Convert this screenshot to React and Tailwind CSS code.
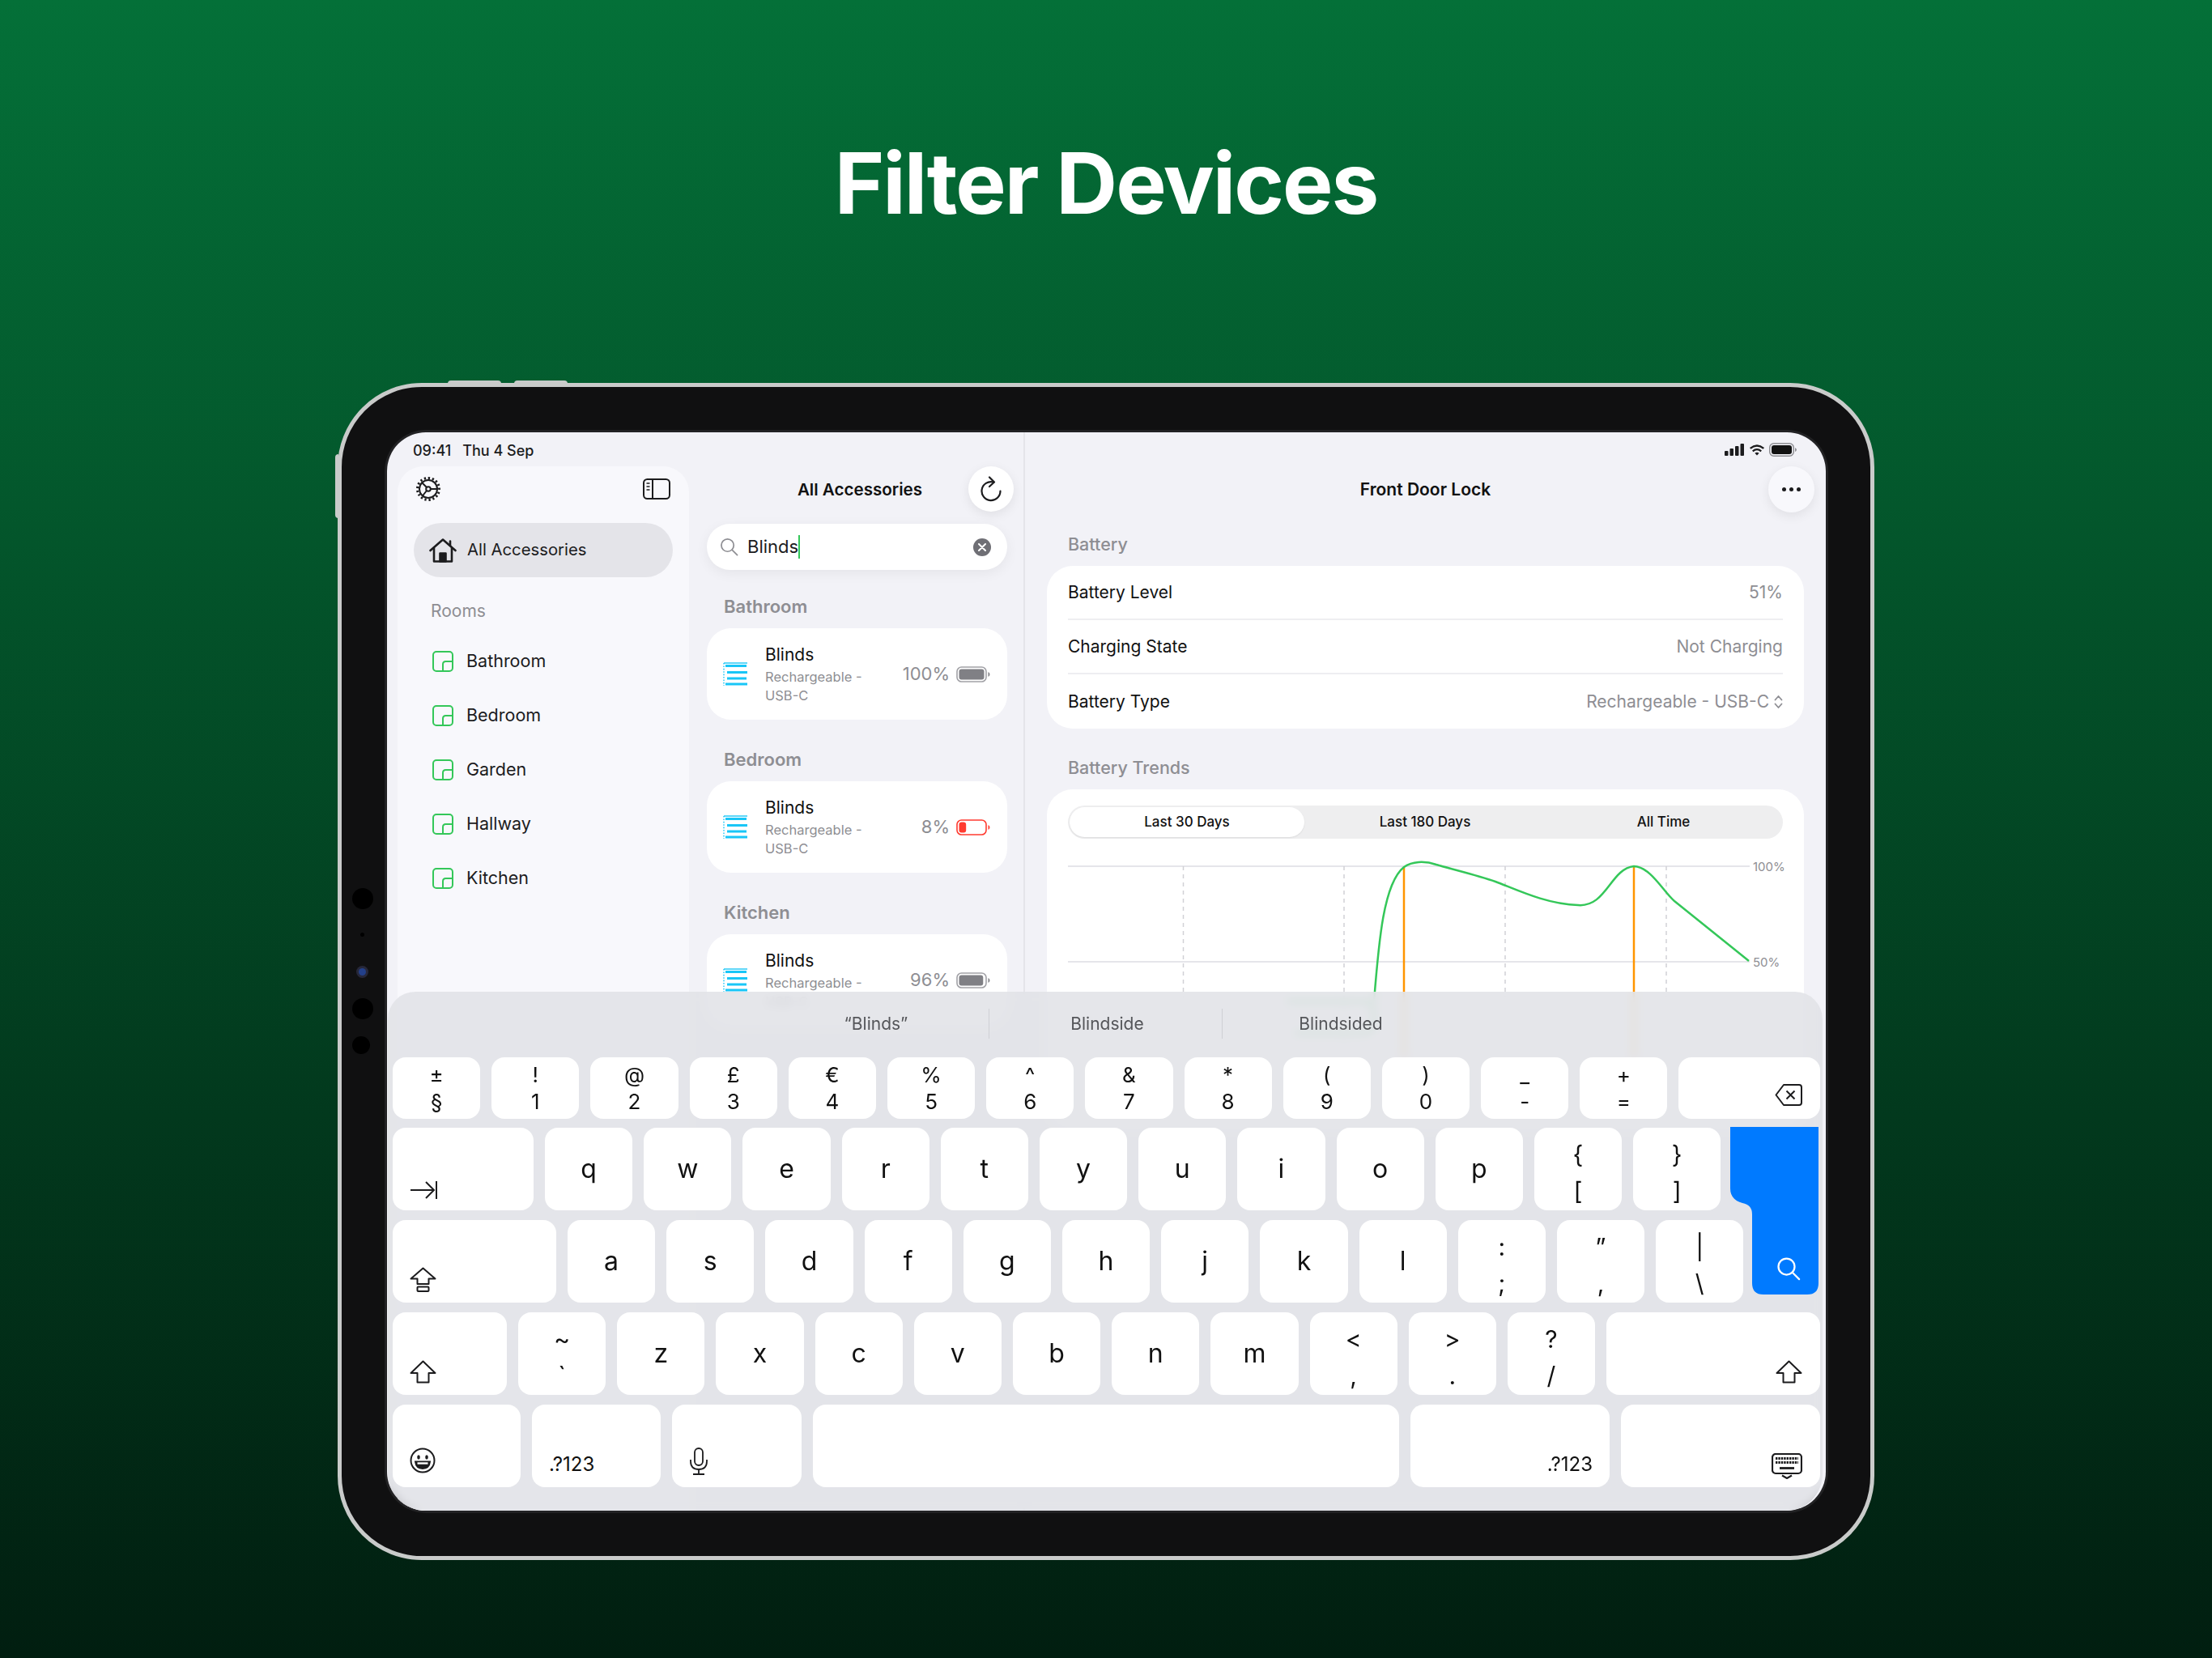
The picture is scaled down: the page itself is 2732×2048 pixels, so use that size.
import React from 'react';

const rooms = ['Bathroom', 'Bedroom', 'Garden', 'Hallway', 'Kitchen'];

const RoomIcon = () => (
  <svg width="26" height="26" viewBox="0 0 26 26" fill="none" stroke="#34c759" strokeWidth="2">
    <rect x="1" y="1" width="24" height="24" rx="4" />
    <path d="M13 25V16.500Q13 13 16.500 13H25" />
  </svg>
);

const GearIcon = () => (
  <svg width="32" height="32" viewBox="0 0 32 32" fill="none" stroke="#1c1c1e" strokeWidth="2">
    <circle cx="16" cy="16" r="11" />
    <circle cx="16" cy="16" r="2.800" />
    <path d="M14 14 7.500 7.500M14 18 8.500 25M18.800 16H27" />
    <path strokeWidth="3" strokeDasharray="2.200 2.720" d="M16 2.500a13.500 13.500 0 1 1-.01 0" />
  </svg>
);

const SidebarIcon = () => (
  <svg width="34" height="26" viewBox="0 0 34 26" fill="none" stroke="#1c1c1e" strokeWidth="2">
    <rect x="1" y="1" width="32" height="24" rx="4.500" />
    <path d="M12 1V25" />
    <path strokeWidth="1.600" d="M4.500 6H8.500M4.500 10H8.500M4.500 14H8.500" />
  </svg>
);

const HomeIcon = () => (
  <svg width="34" height="30" viewBox="0 0 34 30" fill="none" stroke="#1c1c1e" strokeWidth="2.600" strokeLinejoin="round" strokeLinecap="round">
    <path d="M1.500 15 17 1.500 32.500 15" />
    <path d="M6 12V28.500H28V12" />
    <path d="M13.500 28.500V18.500H20.500V28.500Z" fill="#1c1c1e" />
    <path d="M26 3.500V8.500" />
  </svg>
);

const BlindsIcon = () => (
  <svg width="30" height="29" viewBox="0 0 30 29" fill="none" stroke="#19c6f7">
    <path strokeWidth="1.400" d="M1 1H30" />
    <path strokeWidth="2.800" d="M3 4.500H29M5 12.500H30M5 20H29M3 27H30" />
    <path strokeWidth="1.400" strokeDasharray="1.600 1.800" d="M1 1V29" />
  </svg>
);

const Battery = ({ level, low }) => (
  <svg width="42" height="20" viewBox="0 0 42 20" fill="none">
    <rect x="1" y="1" width="36" height="18" rx="5.500" stroke={low ? '#ff3b30' : '#a2a2a7'} strokeWidth="1.600" />
    <rect x="3.500" y="3.500" width={31 * level} height="13" rx="3" fill={low ? '#ff3b30' : '#808085'} />
    <path d="M39.500 7V13Q41.500 12 41.500 10T39.500 7Z" fill={low ? '#ff3b30' : '#808085'} />
  </svg>
);

const SearchGlyph = ({ color = '#8e8e93', size = 24 }) => (
  <svg width={size} height={size} viewBox="0 0 24 24" fill="none" stroke={color} strokeWidth="1.800" strokeLinecap="round">
    <circle cx="10" cy="10" r="8" />
    <path d="m16 16 6.500 6.500" />
  </svg>
);

const ShiftIcon = () => (
  <svg width="33" height="29" viewBox="0 0 33 29" fill="none" stroke="#1c1c1e" strokeWidth="2" strokeLinejoin="round">
    <path d="M16.500 1.500 1.500 16H9.500V27.500H23.500V16H31.500Z" />
  </svg>
);

const CapsIcon = () => (
  <svg width="33" height="31" viewBox="0 0 33 31" fill="none" stroke="#1c1c1e" strokeWidth="2" strokeLinejoin="round">
    <path d="M16.500 1.500 1.500 14.500H9.500V21H23.500V14.500H31.500Z" />
    <rect x="9.500" y="24.500" width="14" height="5.500" rx="1" />
  </svg>
);

const TabIcon = () => (
  <svg width="34" height="24" viewBox="0 0 34 24" fill="none" stroke="#1c1c1e" strokeWidth="2">
    <path d="M1 12H30M20 2l10 10-10 10M33 1V23" />
  </svg>
);

const DeleteIcon = () => (
  <svg width="34" height="29" viewBox="0 0 34 29" fill="none" stroke="#1c1c1e" strokeWidth="2" strokeLinejoin="round">
    <path d="M11 2H30Q33 2 33 5V24Q33 27 30 27H11L1.500 14.500Z" />
    <path d="m14.500 9.500 10 10M24.500 9.500l-10 10" />
  </svg>
);

const EmojiIcon = () => (
  <svg width="32" height="32" viewBox="0 0 32 32" fill="none" stroke="#1c1c1e" strokeWidth="2">
    <circle cx="16" cy="16" r="14.500" />
    <ellipse cx="11" cy="12" rx="1.800" ry="2.800" fill="#1c1c1e" stroke="none" />
    <ellipse cx="21" cy="12" rx="1.800" ry="2.800" fill="#1c1c1e" stroke="none" />
    <path d="M7 17.500H25Q24 26 16 26T7 17.500Z" fill="#1c1c1e" />
    <path d="M9.500 19.500H22.500" stroke="#fff" strokeWidth="2.400" />
  </svg>
);

const MicIcon = () => (
  <svg width="24" height="34" viewBox="0 0 24 34" fill="none" stroke="#1c1c1e" strokeWidth="1.800">
    <rect x="7" y="1" width="10" height="21" rx="5" />
    <path d="M2 15V17Q2 27 12 27T22 17V15M12 27V33M5 33H19" />
  </svg>
);

const KeyboardIcon = () => (
  <svg width="38" height="32" viewBox="0 0 38 32" fill="none" stroke="#1c1c1e" strokeWidth="2.200">
    <rect x="1" y="1" width="36" height="24" rx="4" />
    <path strokeWidth="2.800" strokeDasharray="2.400 1" d="M5 6.500H33M5 11.500H33" />
    <path strokeWidth="2.800" d="M10 18.500H28" />
    <path d="m13 27.500 6 3.500 6-3.500" />
  </svg>
);

const KEY = 'flex shrink-0 bg-white rounded-[16px] text-[#111]';
const Key = ({ w = 'w-[108.2px]', h = 'h-[102px]', className = '', children }) => (
  <div className={`${KEY} ${w} ${h} ${className}`}>{children}</div>
);

const Letter = ({ c }) => (
  <Key className="items-center justify-center text-[32px] leading-none">{c}</Key>
);

const DoubleKey = ({ top, bottom, h = 'h-[102px]', small }) => (
  <Key
    h={h}
    className={`flex-col items-center justify-center leading-none ${small ? 'text-[26px] gap-[7px] pt-[1px]' : 'text-[30px] gap-[15px] pt-[8px]'}`}
  >
    <span>{top}</span>
    <span>{bottom}</span>
  </Key>
);

const Keyboard = () => (
  <div className="absolute left-[1px] right-[4px] bottom-0 h-[641px] rounded-t-[34px] rounded-b-[46px] bg-[#e1e2e6]/85 backdrop-blur-[6px] pl-[6px] flex flex-col">
    <div className="h-[81px] flex items-center pb-[2px] text-[21px] text-[#55565a]">
      <div className="w-[737px] pl-[479px] flex items-center justify-between">
        <span className="w-[236px] text-center">“Blinds”</span>
        <span className="w-px h-[37px] bg-[#cfd0d5]"></span>
      </div>
      <div className="w-[288px] flex items-center justify-between">
        <span className="w-[287px] pl-[4px] text-center">Blindside</span>
        <span className="w-px h-[37px] bg-[#cfd0d5]"></span>
      </div>
      <span className="w-[292px] text-center">Blindsided</span>
    </div>

    <div className="flex gap-[14px]">
      {[['±', '§'], ['!', '1'], ['@', '2'], ['£', '3'], ['€', '4'], ['%', '5'], ['^', '6'], ['&', '7'], ['*', '8'], ['(', '9'], [')', '0'], ['_', '-'], ['+', '=']].map(([t, b]) => (
        <DoubleKey key={t} top={t} bottom={b} h="h-[76px]" small />
      ))}
      <Key w="w-[175px]" h="h-[76px]" className="items-end justify-end pr-[22px] pb-[15px]"><DeleteIcon /></Key>
    </div>

    <div className="relative">
      <div className="flex gap-[14px] mt-[11px]">
        <Key w="w-[174px]" className="items-end pl-[21px] pb-[13px]"><TabIcon /></Key>
        {['q', 'w', 'e', 'r', 't', 'y', 'u', 'i', 'o', 'p'].map(c => <Letter key={c} c={c} />)}
        <DoubleKey top="{" bottom="[" />
        <DoubleKey top="}" bottom="]" />
      </div>
      <div className="flex gap-[14px] mt-[12px]">
        <Key w="w-[202px]" className="items-end pl-[21px] pb-[13px]"><CapsIcon /></Key>
        {['a', 's', 'd', 'f', 'g', 'h', 'j', 'k', 'l'].map(c => <Letter key={c} c={c} />)}
        <DoubleKey top=":" bottom=";" />
        <DoubleKey top="”" bottom="," />
        <DoubleKey top="|" bottom="\" />
      </div>

      {/* return key spans two rows */}
      <div className="absolute left-[1652px] top-[10px] w-[109px] h-[207px]">
        <svg width="109" height="207" viewBox="0 0 109 207" fill="#007aff">
          <path d="M0 0H109V193Q109 207 95 207H41Q27 207 27 193V108Q27 96 15 94Q0 90 0 76Z" />
        </svg>
        <div className="absolute right-[22px] bottom-[17px]"><SearchGlyph color="#fff" size={30} /></div>
      </div>
    </div>

    <div className="flex gap-[14px] mt-[12px]">
      <Key w="w-[141px]" className="items-end pl-[21px] pb-[14px]"><ShiftIcon /></Key>
      <DoubleKey top="~" bottom="`" />
      {['z', 'x', 'c', 'v', 'b', 'n', 'm'].map(c => <Letter key={c} c={c} />)}
      <DoubleKey top="<" bottom="," />
      <DoubleKey top=">" bottom="." />
      <DoubleKey top="?" bottom="/" />
      <Key w="w-[264px]" className="items-end justify-end pr-[22px] pb-[14px]"><ShiftIcon /></Key>
    </div>

    <div className="flex gap-[14px] mt-[12px]">
      <Key w="w-[158px]" className="items-end pl-[21px] pb-[17px]"><EmojiIcon /></Key>
      <Key w="w-[159px]" className="items-end pl-[21px] pb-[16px] text-[24px] leading-none">.?123</Key>
      <Key w="w-[160px]" className="items-end pl-[21px] pb-[15px]"><MicIcon /></Key>
      <Key w="w-[724px]" />
      <Key w="w-[246px]" className="items-end justify-end pr-[21px] pb-[16px] text-[24px] leading-none">.?123</Key>
      <Key w="w-[246px]" className="items-end justify-end pr-[22px] pb-[10px]"><KeyboardIcon /></Key>
    </div>
  </div>
);

const DeviceRow = ({ room, pct, level, low }) => (
  <div>
    <div className="h-[56px] pl-[21px] pt-[18px] text-[22px] leading-none font-semibold text-[#8e8e93]">{room}</div>
    <div className="h-[113px] rounded-[30px] bg-white flex items-center pl-[20px] pr-[21px] mb-[20px]">
      <BlindsIcon />
      <div className="ml-[22px] w-[140px]">
        <div className="text-[21px] leading-[27px] mb-[3px] text-[#111]">Blinds</div>
        <div className="text-[16.500px] leading-[23px] text-[#8e8e93]">Rechargeable - USB-C</div>
      </div>
      <div className="flex-1 flex items-center justify-end gap-[8px]">
        <span className="text-[22px] text-[#8e8e93]">{pct}</span>
        <Battery level={level} low={low} />
      </div>
    </div>
  </div>
);

const Sidebar = () => (
  <div className="w-[360px] shrink-0 ml-[13px] mt-[42px] rounded-t-[32px] bg-[#f8f8fc] px-[20px] pt-[12px]">
    <div className="flex items-center justify-between pl-[2px] pr-[3px] h-[32px]">
      <GearIcon />
      <SidebarIcon />
    </div>
    <div className="mt-[26px] h-[67px] rounded-full bg-[#e4e4e9] flex items-center gap-[13px] pl-[19px] text-[20.300px] text-[#1c1c1e]">
      <HomeIcon />
      All Accessories
    </div>
    <div className="pl-[21px] mt-[29px] text-[21px] leading-[26px] text-[#8e8e93]">Rooms</div>
    <div className="mt-[15px]">
      {rooms.map(r => (
        <div key={r} className="h-[67px] flex items-center gap-[16px] pl-[23px] text-[21.500px] text-[#1c1c1e]">
          <RoomIcon />
          {r}
        </div>
      ))}
    </div>
  </div>
);

const Accessories = () => (
  <div className="w-[415px] shrink-0 border-r-2 border-[#e5e5ea] pl-[22px] pr-[20px] pt-[42px]">
    <div className="relative h-[56px] flex items-center justify-center pl-[7px] pt-[2px] text-[20.600px] font-semibold text-[#111]">
      All Accessories
      <div className="absolute -right-[8px] top-0 w-[56px] h-[56px] rounded-full bg-white shadow-[0_4px_14px_rgba(0,0,0,0.08)] flex items-center justify-center">
        <svg width="26" height="32" viewBox="0 0 26 32" fill="none" stroke="#1c1c1e" strokeWidth="2.200" strokeLinecap="round" strokeLinejoin="round">
          <path d="M16 7.500A11.500 11.500 0 1 0 24.500 18.500" />
          <path d="M11 1.500 17 7.500 11 13" />
        </svg>
      </div>
    </div>
    <div className="mt-[15px] h-[57px] rounded-full bg-white shadow-[0_4px_16px_rgba(0,0,0,0.06)] flex items-center pl-[16px] pr-[20px] text-[22px] text-[#1c1c1e]">
      <SearchGlyph size={23} />
      <span className="ml-[11px]">Blinds</span>
      <span className="w-[2px] h-[29px] bg-[#34c759]"></span>
      <span className="ml-auto w-[22px] h-[22px] rounded-full bg-[#6f6f75] flex items-center justify-center">
        <svg width="10" height="10" viewBox="0 0 10 10" stroke="#fff" strokeWidth="2" strokeLinecap="round"><path d="m1 1 8 8M9 1 1 9" /></svg>
      </span>
    </div>
    <div className="mt-[16px]">
      <DeviceRow room="Bathroom" pct="100%" level={1} />
      <DeviceRow room="Bedroom" pct="8%" level={0.28} low />
      <DeviceRow room="Kitchen" pct="96%" level={0.96} />
    </div>
  </div>
);

const Chart = () => (
  <svg width="885" height="290" viewBox="0 0 885 290" fill="none" className="mt-[25px]">
    <path stroke="#e5e5ea" strokeWidth="2" d="M0 9H842M0 127H842M0 245H842" />
    <path stroke="#d1d1d6" strokeWidth="1.500" strokeDasharray="5 5" d="M142.500 9V245M341 9V245M540 9V245M739 9V245" />
    <text x="846" y="15" fontSize="15" fill="#8e8e93">100%</text>
    <text x="846" y="133" fontSize="15" fill="#8e8e93">50%</text>
    <path stroke="#ff9500" strokeWidth="2.500" d="M415 10V245M699 10V245" />
    <path
      stroke="#34c759"
      strokeWidth="2.500"
      strokeLinejoin="round"
      d="M280 215H365Q378 215 378 202V190Q378 176 365 176H270M378 176C384 100 390 30 415 10C425 3 440 2 455 7C475 13 505 20 528 28C550 36 590 56 630 57C665 60 670 12 699 9C720 10 735 40 749 52L841 126"
    />
  </svg>
);

const Detail = () => (
  <div className="flex-1 min-w-0 pl-[27px] pr-[27px] pt-[42px]">
    <div className="relative h-[56px] flex items-center justify-center pt-[2px] text-[21px] font-semibold text-[#111]">
      Front Door Lock
      <div className="absolute -right-[13px] top-0 w-[57px] h-[57px] rounded-full bg-[#f8f8fc] shadow-[0_4px_14px_rgba(0,0,0,0.08)] flex items-center justify-center gap-[4px]">
        <span className="w-[5px] h-[5px] rounded-full bg-[#1c1c1e]"></span>
        <span className="w-[5px] h-[5px] rounded-full bg-[#1c1c1e]"></span>
        <span className="w-[5px] h-[5px] rounded-full bg-[#1c1c1e]"></span>
      </div>
    </div>
    <div className="pl-[26px] mt-[27px] text-[21.500px] leading-[26px] font-medium text-[#8e8e93]">Battery</div>
    <div className="mt-[14px] rounded-[32px] bg-white px-[26px] text-[21px] text-[#111]">
      <div className="h-[67px] flex items-center justify-between border-b-2 border-[#eeeef1]">
        Battery Level <span className="text-[#8e8e93]">51%</span>
      </div>
      <div className="h-[67px] flex items-center justify-between border-b-2 border-[#eeeef1]">
        Charging State <span className="text-[#8e8e93]">Not Charging</span>
      </div>
      <div className="h-[67px] flex items-center justify-between">
        Battery Type
        <span className="flex items-center gap-[6px] text-[#8e8e93]">
          Rechargeable - USB-C
          <svg width="11" height="18" viewBox="0 0 11 18" fill="none" stroke="#8e8e93" strokeWidth="1.800" strokeLinecap="round" strokeLinejoin="round"><path d="M1.500 6.500 5.500 2l4 4.500M1.500 11.500l4 4.500 4-4.500" /></svg>
        </span>
      </div>
    </div>
    <div className="pl-[26px] mt-[35px] text-[21.500px] leading-[26px] font-medium text-[#8e8e93]">Battery Trends</div>
    <div className="mt-[14px] rounded-[32px] bg-white px-[26px] pt-[20px] h-[420px]">
      <div className="h-[41px] rounded-full bg-[#eeeeef] p-[2px] flex text-[17px] font-medium text-[#111]">
        <div className="w-[290px] rounded-full bg-white flex items-center justify-center shadow-[0_1px_2px_rgba(0,0,0,0.08)]">Last 30 Days</div>
        <div className="w-[298px] flex items-center justify-center">Last 180 Days</div>
        <div className="flex-1 flex items-center justify-center">All Time</div>
      </div>
      <Chart />
    </div>
  </div>
);

const App = () => (
  <div
    className="w-[2732px] h-[2048px] overflow-hidden bg-[linear-gradient(to_bottom,#047038,#011e10)]"
    style={{ fontFamily: 'Inter, "Liberation Sans", sans-serif' }}
  >
    <div className="h-[473px] pt-[166px] text-center text-white text-[105px] leading-[120px] font-bold tracking-[-2px]">
      Filter Devices
    </div>

    <div className="relative w-[1898px] h-[1454px] mx-auto rounded-[104px] border-[5px] border-[#c9cbca] bg-[#101011] p-[56px]">
      {/* hardware buttons */}
      <div className="absolute left-[131px] -top-[8px] w-[66px] h-[4px] rounded-t bg-[#c9cbca]"></div>
      <div className="absolute left-[213px] -top-[8px] w-[66px] h-[4px] rounded-t bg-[#c9cbca]"></div>
      <div className="absolute -left-[8px] top-[83px] w-[4px] h-[79px] rounded-l bg-[#c9cbca]"></div>
      {/* front camera */}
      <div className="absolute left-[13px] top-[619px] w-[26px] h-[26px] rounded-full bg-black"></div>
      <div className="absolute left-[23px] top-[674px] w-[5px] h-[5px] rounded-full bg-black"></div>
      <div className="absolute left-[18px] top-[715px] w-[15px] h-[15px] rounded-full bg-[#27283a] p-[3px]"><div className="w-full h-full rounded-full bg-[#23408a]"></div></div>
      <div className="absolute left-[13px] top-[755px] w-[26px] h-[26px] rounded-full bg-black"></div>
      <div className="absolute left-[13px] top-[802px] w-[22px] h-[22px] rounded-full bg-black"></div>

      <div className="relative w-[1777px] h-[1332px] rounded-[48px] overflow-hidden bg-[#f2f2f7] flex ring-[3px] ring-[#222224]">
        <div className="absolute left-[32px] top-[11px] flex gap-[14px] text-[18px] leading-[24px] font-medium text-[#1c1c1e]">
          <span>09:41</span>
          <span>Thu 4 Sep</span>
        </div>
        <div className="absolute right-[36px] top-[13px] flex items-center gap-[6px]">
          <svg width="24" height="15" viewBox="0 0 24 15" fill="#1c1c1e">
            <rect x="0" y="9" width="4.500" height="6" rx="1" />
            <rect x="6.500" y="6" width="4.500" height="9" rx="1" />
            <rect x="13" y="3" width="4.500" height="12" rx="1" />
            <rect x="19.500" y="0" width="4.500" height="15" rx="1" />
          </svg>
          <svg width="20" height="14" viewBox="0 0 22 16" fill="none" stroke="#1c1c1e" strokeWidth="2.600">
            <path d="M1.500 5.500Q11-2 20.500 5.500M5 9.500Q11 4.500 17 9.500" />
            <path d="M11 15.500 8 12.200Q11 10 14 12.200Z" fill="#1c1c1e" stroke="none" />
          </svg>
          <svg width="34" height="17" viewBox="0 0 34 17" className="ml-[-1px]">
            <rect x="0.750" y="0.750" width="29.500" height="15.500" rx="5" fill="none" stroke="#8e8e93" strokeWidth="1.500" />
            <rect x="3" y="3" width="25" height="11" rx="3" fill="#111" />
            <path d="M32 6V11Q34 10 34 8.500T32 6Z" fill="#8e8e93" />
          </svg>
        </div>

        <Sidebar />
        <Accessories />
        <Detail />
        <Keyboard />
      </div>
    </div>
  </div>
);

export default App;
